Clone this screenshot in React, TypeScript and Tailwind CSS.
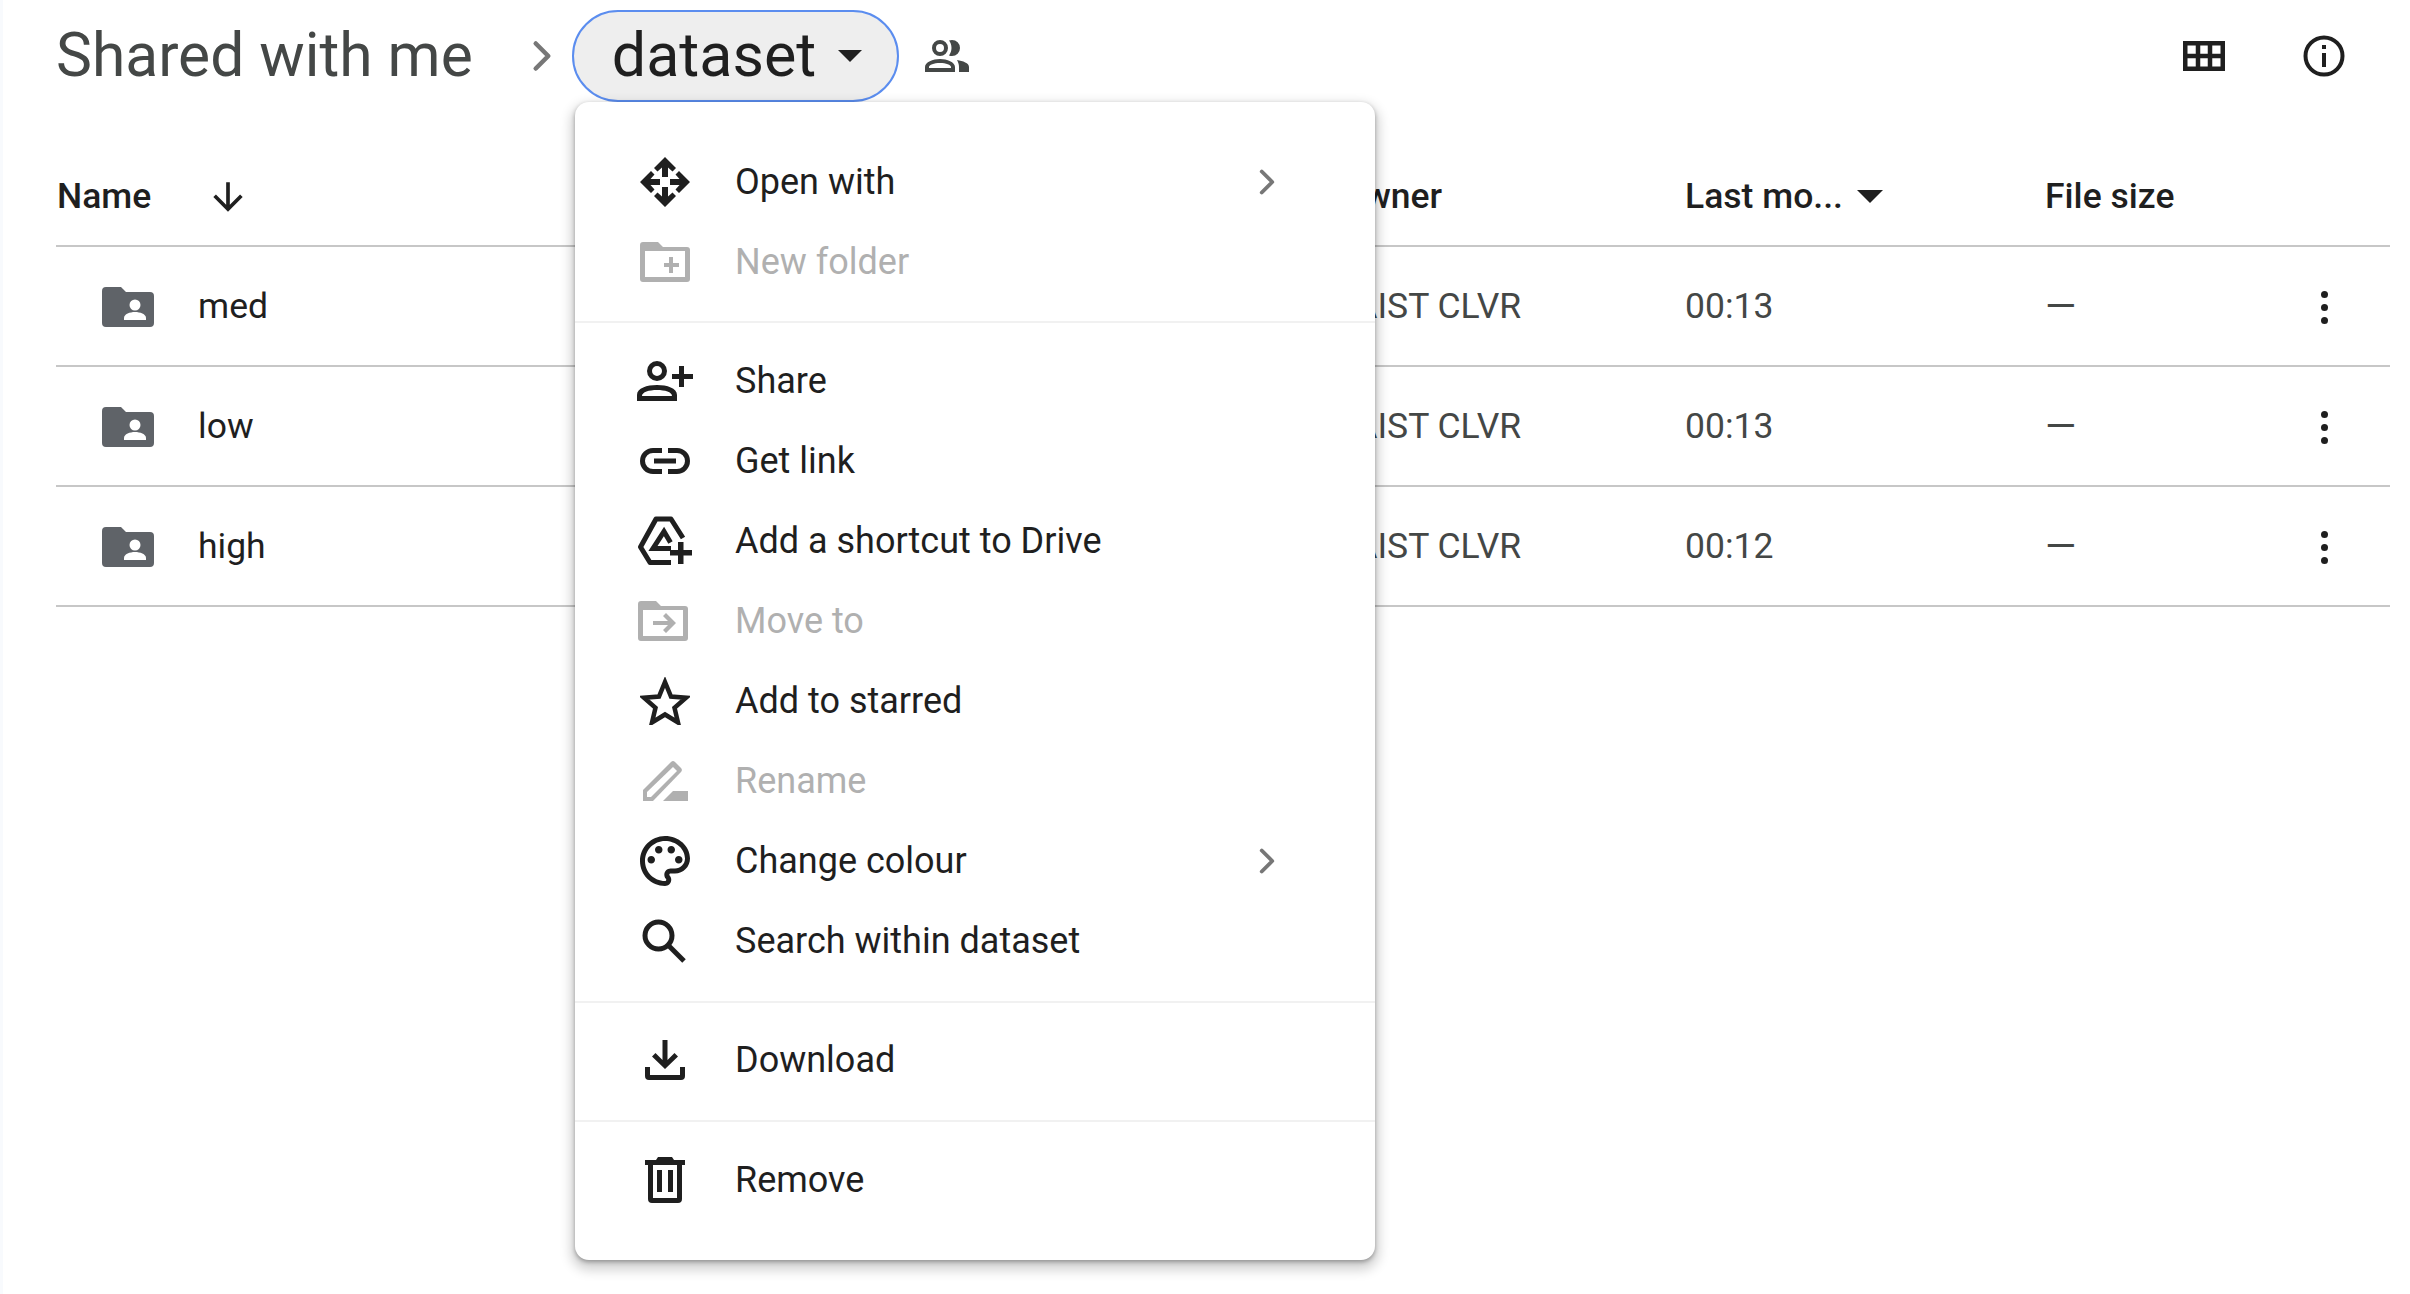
import React from 'react';
import { ChevronRight } from 'lucide-react';

const font = { fontFamily: '"Roboto", "Liberation Sans", sans-serif' };

function OpenWithIcon() {
  return (
    <svg viewBox="0 0 50 50" className="w-[50px] h-[50px]" fill="#1f1f1f">
      <path d="M25 0 L36 11 L32.500 14.500 L28 10.500 V20 H22 V10.500 L17.500 14.500 L14 11 Z" />
      <path d="M25 50 L36 39 L32.500 35.500 L28 39.500 V30 H22 V39.500 L17.500 35.500 L14 39 Z" />
      <path d="M0 25 L11 14 L14.500 17.500 L10.500 22 H20 V28 H10.500 L14.500 32.500 L11 36 Z" />
      <path d="M50 25 L39 14 L35.500 17.500 L39.500 22 H30 V28 H39.500 L35.500 32.500 L39 36 Z" />
    </svg>
  );
}

function NewFolderIcon() {
  return (
    <svg viewBox="0 0 50 40" className="w-[50px] h-[40px]" fill="#b0b0b0">
      <path fillRule="evenodd" d="M3 0h15l5 5h24a3 3 0 0 1 3 3v29a3 3 0 0 1-3 3H3a3 3 0 0 1-3-3V3a3 3 0 0 1 3-3zM5 9v26h40V9z" />
      <path d="M29 15h4v6h6v4h-6v6h-4v-6h-5v-4h5z" />
    </svg>
  );
}

function ShareIcon() {
  return (
    <svg viewBox="0 0 56 40" className="w-[56px] h-[40px]" fill="#1f1f1f">
      <path fillRule="evenodd" d="M20 0a10 10 0 1 1 0 20a10 10 0 0 1 0-20zM20 5a5 5 0 1 0 0 10a5 5 0 0 0 0-10z" />
      <path fillRule="evenodd" d="M0 40v-6c0-7 10-10 20-10s20 3 20 10v6zM5 35h30c0-4-7-6-15-6s-15 2-15 6z" />
      <path d="M42 5h5v8h9v5h-9v8h-5v-8h-7v-5h7z" />
    </svg>
  );
}

function LinkIcon() {
  return (
    <svg viewBox="0 0 50 26" className="w-[50px] h-[26px]" fill="none" stroke="#1f1f1f" strokeWidth="5">
      <path d="M22 2.500H13a10.500 10.500 0 0 0 0 21h9" />
      <path d="M28 2.500h9a10.500 10.500 0 0 1 0 21h-9" />
      <path d="M14 13h22" />
    </svg>
  );
}

function ShortcutIcon() {
  return (
    <svg viewBox="0 0 54 50" className="w-[54px] h-[50px]">
      <path d="M33 46.500H12L2.500 31 18 3h15l12 19" fill="none" stroke="#1f1f1f" strokeWidth="5" strokeLinejoin="round" />
      <path d="M32.500 26.500L26 15.500 15 32.500h18" fill="none" stroke="#1f1f1f" strokeWidth="5" />
      <path d="M40 26h5.500v8h8.500v5.500h-8.500v8.500H40v-8.500h-8V34h8z" fill="#1f1f1f" />
    </svg>
  );
}

function MoveToIcon() {
  return (
    <svg viewBox="0 0 50 40" className="w-[50px] h-[40px] -translate-x-[2px]" fill="#b0b0b0">
      <path fillRule="evenodd" d="M3 0h15l5 5h24a3 3 0 0 1 3 3v29a3 3 0 0 1-3 3H3a3 3 0 0 1-3-3V3a3 3 0 0 1 3-3zM5 9v26h40V9z" />
      <path d="M28 12l10 10-10 10-3-3 5-5H15v-4h15l-5-5z" />
    </svg>
  );
}

function StarIcon() {
  return (
    <svg viewBox="0 0 50 48" className="w-[50px] h-[48px]" fill="none" stroke="#1f1f1f" strokeWidth="4.500">
      <path d="M25 5l6 14.500 15 1.200-11.500 10 3.500 14.800-13-8-13 8 3.500-14.800L4 20.700l15-1.200z" />
    </svg>
  );
}

function RenameIcon() {
  return (
    <svg viewBox="0 0 46 40" className="w-[46px] h-[40px]">
      <path d="M1 40V29L29 1a3 3 0 0 1 4 0l6 6a3 3 0 0 1 0 4L11 40z" fill="#b0b0b0" />
      <path d="M5 36v-5L31 6l4 4L9 36z" fill="#fff" />
      <path d="M21 40l10-10h15v10z" fill="#b0b0b0" />
    </svg>
  );
}

function PaletteIcon() {
  return (
    <svg viewBox="0 0 24 24" className="w-[60px] h-[60px]" fill="#1f1f1f">
      <path d="M12 2C6.490 2 2 6.490 2 12s4.490 10 10 10c1.380 0 2.500-1.120 2.500-2.500 0-.61-.23-1.200-.64-1.670-.08-.1-.13-.21-.13-.33 0-.28.22-.5.5-.5H16c3.310 0 6-2.690 6-6 0-4.960-4.490-9-10-9zm5.500 11c-.83 0-1.500-.67-1.500-1.500s.67-1.500 1.500-1.500 1.500.67 1.500 1.500-.67 1.500-1.500 1.500zm-3-4c-.83 0-1.500-.67-1.500-1.500S13.670 6 14.500 6s1.500.67 1.500 1.500S15.330 9 14.500 9zM5 11.500c0-.83.67-1.500 1.500-1.500s1.500.67 1.500 1.500S7.330 13 6.500 13 5 12.330 5 11.500zm6-4c0 .83-.67 1.500-1.500 1.500S8 8.330 8 7.500 8.670 6 9.500 6s1.500.67 1.500 1.500zM12 20c-4.410 0-8-3.590-8-8s3.590-8 8-8 8 3.140 8 7c0 2.210-1.790 4-4 4h-1.770c-1.380 0-2.500 1.120-2.500 2.500 0 .59.210 1.160.6 1.630.14.170.17.370.17.370 0 .28-.22.500-.5.500z" />
    </svg>
  );
}

function SearchIcon() {
  return (
    <svg viewBox="0 0 44 44" className="w-[44px] h-[44px] -translate-x-[1px]" fill="none" stroke="#1f1f1f" strokeWidth="5">
      <circle cx="16.500" cy="16.500" r="13.500" />
      <path d="M26 26l16 16" />
    </svg>
  );
}

function DownloadIcon() {
  return (
    <svg viewBox="0 0 40 40" className="w-[40px] h-[40px]" fill="#1f1f1f">
      <path d="M17.500 0h5v20l7-7 3.500 3.500L20 29 7 16.500 10.500 13l7 7z" />
      <path d="M0 27h5v8h30v-8h5v9a4 4 0 0 1-4 4H4a4 4 0 0 1-4-4z" />
    </svg>
  );
}

function TrashIcon() {
  return (
    <svg viewBox="0 0 40 46" className="w-[40px] h-[46px]" fill="#1f1f1f">
      <path d="M13 0h14l2 3h11v5H0V3h11z" />
      <path fillRule="evenodd" d="M3 8h34v34a4 4 0 0 1-4 4H7a4 4 0 0 1-4-4zM8 8v33h24V8z" />
      <path d="M12 13h5v22h-5zM23 13h5v22h-5z" />
    </svg>
  );
}

function SharedFolderIcon() {
  return (
    <svg viewBox="0 0 52 40" className="w-[52px] h-[40px]">
      <path d="M4 0h15l5 5h24a4 4 0 0 1 4 4v27a4 4 0 0 1-4 4H4a4 4 0 0 1-4-4V4a4 4 0 0 1 4-4z" fill="#5f6368" />
      <circle cx="33" cy="18" r="5.500" fill="#fff" />
      <path d="M22 33v-2c0-4 6-6 11-6s11 2 11 6v2z" fill="#fff" />
    </svg>
  );
}

function PeopleIcon() {
  return (
    <svg viewBox="0 0 44 32" className="w-[44px] h-[32px]" fill="#444746">
      <path fillRule="evenodd" d="M15 0a8 8 0 1 1 0 16a8 8 0 0 1 0-16zM15 4a4 4 0 1 0 0 8a4 4 0 0 0 0-8z" />
      <path d="M27 0a8 8 0 0 1 0 16c-1 0-2-.2-3-.6 1.500-2 2.500-4.500 2.500-7.400S25.500 2.600 24 .6c1-.4 2-.6 3-.6z" />
      <path fillRule="evenodd" d="M0 32v-5c0-5 8-8 15-8s15 3 15 8v5zM4 28h22v-1c0-2-5-4-11-4S4 25 4 27z" />
      <path d="M32 20c6 1 12 3 12 7v5h-10v-5c0-3-1-5-2-7z" />
    </svg>
  );
}

function GridIcon() {
  return (
    <svg viewBox="0 0 42 30" className="w-[42px] h-[30px]" fill="none" stroke="#1f1f1f" strokeWidth="4.500">
      <rect x="2.250" y="2.250" width="37.500" height="25.500" />
      <path d="M15 2v26M27 2v26M2 15h38" />
    </svg>
  );
}

function InfoIcon() {
  return (
    <svg viewBox="0 0 42 42" className="w-[42px] h-[42px]">
      <circle cx="21" cy="21" r="18.500" fill="none" stroke="#1f1f1f" strokeWidth="4" />
      <rect x="19" y="18" width="4" height="14" fill="#1f1f1f" />
      <rect x="19" y="10" width="4" height="4" fill="#1f1f1f" />
    </svg>
  );
}

function MoreIcon() {
  return (
    <div className="flex flex-col items-center gap-[6px]">
      <span className="w-[7px] h-[7px] rounded-full bg-[#1f1f1f]" />
      <span className="w-[7px] h-[7px] rounded-full bg-[#1f1f1f]" />
      <span className="w-[7px] h-[7px] rounded-full bg-[#1f1f1f]" />
    </div>
  );
}

const rows = [
  { name: 'med', time: '00:13' },
  { name: 'low', time: '00:13' },
  { name: 'high', time: '00:12' },
];

function MenuItem({ icon, label, disabled, arrow }: { icon: React.ReactNode; label: string; disabled?: boolean; arrow?: boolean }) {
  return (
    <div className="flex items-center h-[80px]">
      <div className="w-[160px] pl-[20px] flex items-center justify-center shrink-0">{icon}</div>
      <span className={`text-[36px] ${disabled ? 'text-[#b0b0b0]' : 'text-[#1f1f1f]'}`}>{label}</span>
      {arrow && <ChevronRight className="ml-auto mr-[87px] text-[#777]" size={42} strokeWidth={2.200} />}
    </div>
  );
}

export default function App() {
  return (
    <div className="relative w-[2410px] h-[1294px] bg-white overflow-hidden border-l-[3px] border-[#f8fafd]" style={font}>
      <div className="flex items-center h-[102px] pt-[10px] pl-[53px] pr-[65px]">
        <span className="text-[60.500px] text-[#444746]">Shared with me</span>
        <ChevronRight className="ml-[44px] mr-[5px] text-[#777]" size={50} strokeWidth={2.200} />
        <div className="flex items-center h-[92px] w-[327px] pl-[38px] rounded-full bg-[#eeeeee] border-2 border-[#5b8def]">
          <span className="text-[61px] text-[#1f1f1f]">dataset</span>
          <div className="ml-[22px] w-0 h-0 border-x-[12px] border-x-transparent border-t-[12px] border-t-[#1f1f1f]" />
        </div>
        <div className="ml-[26px]"><PeopleIcon /></div>
        <div className="ml-auto flex items-center gap-[78px]">
          <GridIcon />
          <InfoIcon />
        </div>
      </div>

      <div className="ml-[53px] mr-[20px]">
        <div className="grid grid-cols-[1274px_355px_360px_1fr] items-center h-[145px] pt-[46px] border-b-2 border-[#c7c7c7] text-[35.500px] text-[#1f1f1f] font-medium">
          <div className="flex items-center pl-[1px]">
            Name
            <svg viewBox="0 0 24 24" className="ml-[55px] w-[44px] h-[44px]" fill="#1f1f1f">
              <path d="M20 12l-1.410-1.410L13 16.170V4h-2v12.170l-5.580-5.590L4 12l8 8 8-8z" />
            </svg>
          </div>
          <div className="pl-[10px]">Owner</div>
          <div className="flex items-center">
            Last mo...
            <div className="ml-[14px] w-0 h-0 border-x-[13px] border-x-transparent border-t-[13px] border-t-[#1f1f1f]" />
          </div>
          <div>File size</div>
        </div>
        {rows.map(r => (
          <div key={r.name} className="grid grid-cols-[1274px_355px_360px_1fr] items-center h-[120px] pt-[2px] border-b-2 border-[#c7c7c7] text-[35.500px] text-[#444746]">
            <div className="flex items-center pl-[46px] text-[#1f1f1f]">
              <SharedFolderIcon />
              <span className="ml-[44px]">{r.name}</span>
            </div>
            <div className="pl-[2px]">KAIST CLVR</div>
            <div>{r.time}</div>
            <div className="flex items-center justify-between pr-[62px]">
              <span className="text-[40px]">—</span>
              <MoreIcon />
            </div>
          </div>
        ))}
      </div>

      <div className="absolute left-[572px] top-[102px] w-[800px] h-[1158px] bg-white rounded-[14px] shadow-[0_6px_12px_4px_rgba(0,0,0,0.18),0_2px_4px_rgba(0,0,0,0.3)] pt-[40px]">
        <MenuItem icon={<OpenWithIcon />} label="Open with" arrow />
        <MenuItem icon={<NewFolderIcon />} label="New folder" disabled />
        <div className="h-[2px] bg-[#f1f1f1] mt-[19px] mb-[18px]" />
        <MenuItem icon={<ShareIcon />} label="Share" />
        <MenuItem icon={<LinkIcon />} label="Get link" />
        <MenuItem icon={<ShortcutIcon />} label="Add a shortcut to Drive" />
        <MenuItem icon={<MoveToIcon />} label="Move to" disabled />
        <MenuItem icon={<StarIcon />} label="Add to starred" />
        <MenuItem icon={<RenameIcon />} label="Rename" disabled />
        <MenuItem icon={<PaletteIcon />} label="Change colour" arrow />
        <MenuItem icon={<SearchIcon />} label="Search within dataset" />
        <div className="h-[2px] bg-[#f1f1f1] mt-[20px] mb-[17px]" />
        <MenuItem icon={<DownloadIcon />} label="Download" />
        <div className="h-[2px] bg-[#f1f1f1] mt-[20px] mb-[18px]" />
        <MenuItem icon={<TrashIcon />} label="Remove" />
      </div>
    </div>
  );
}
